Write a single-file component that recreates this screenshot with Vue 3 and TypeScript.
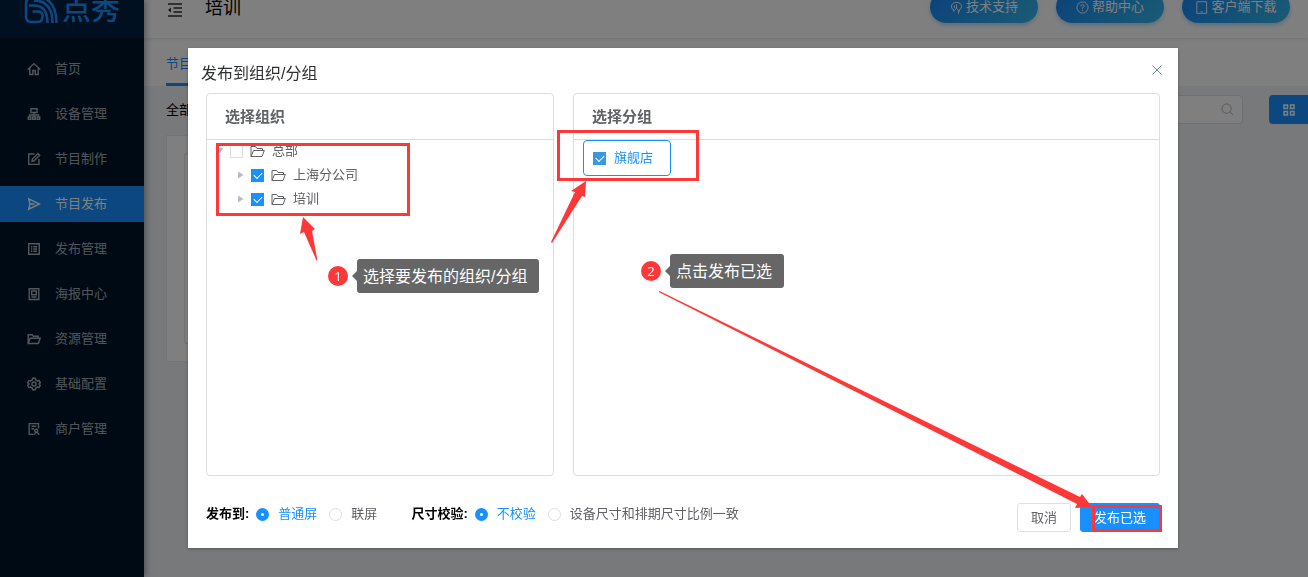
<script setup lang="ts">
import { ref } from 'vue'

interface MenuItem { label: string; icon: string; active?: boolean }
interface TreeNode { label: string; level: number; checked: boolean; open: boolean }

const menu: MenuItem[] = [
  { label: '首页', icon: 'M.8 7.500 7 1.600l6.200 5.900M2.800 6v6.500h3V8.500h2.400v4h3V6' },
  { label: '设备管理', icon: 'M4 1.700h6v3.800H4zM7 5.500v3M2.500 10V8h9v2M7 8v2M1.300 10h2.600v2.200H1.300zM5.700 10h2.600v2.200H5.700zM10.100 10h2.600v2.200h-2.600z' },
  { label: '节目制作', icon: 'M7.500 2H1.700v10.400H12V7M5 9.300l.4-2.200L11 1.500l1.700 1.700-5.600 5.600z' },
  { label: '节目发布', icon: 'M1.700 1.800 12.500 7 1.700 12.200 3 7zM3 7h4.500', active: true },
  { label: '发布管理', icon: 'M1.700 1.700h10.600v10.600H1.700zM4 4.700h1.300M6.300 4.700H10M4 7h1.300M6.300 7H10M4 9.300h1.300M6.300 9.300H10' },
  { label: '海报中心', icon: 'M2.200 1.700h9.600v10.800H2.200zM4.700 4h4.600v3.700H4.700zM4.500 10h5' },
  { label: '资源管理', icon: 'M1.200 11.500V2.700h4l1.200 1.600h4.800v1.900M1.200 11.500l2-5.300h10l-1.800 5.300z' },
  { label: '基础配置', icon: 'M5.700 1.300h2.600l.5 1.700 1.600.9 1.700-.4 1.200 2.200-1.200 1.300 1.200 1.300-1.200 2.200-1.700-.4-1.600.9-.5 1.700H5.700L5.200 11l-1.600-.9-1.700.4L.7 8.300 1.900 7 .7 5.700l1.200-2.200 1.700.4L5.200 3zM7 5a2 2 0 1 0 0 4 2 2 0 0 0 0-4' },
  { label: '商户管理', icon: 'M6.500 12.400H2.200V1.600h9.300v5M4.500 4.300h4.700M4.500 6.800H7M9.200 7.300a1.500 1.500 0 1 0 0 3 1.500 1.500 0 0 0 0-3M7.500 12.700l1-2.400M12.200 12.700l-2-2.400' },
]

const tree = ref<TreeNode[]>([
  { label: '总部', level: 0, checked: false, open: true },
  { label: '上海分公司', level: 1, checked: true, open: false },
  { label: '培训', level: 1, checked: true, open: false },
])
const groupChecked = ref(true)
const target = ref('normal')
const check = ref('none')
const keyword = ref('')
</script>

<template>
  <div class="page">
    <aside class="sidebar">
      <div class="brand">
        <svg class="mark" viewBox="0 0 34 28" aria-hidden="true">
          <path d="M13 1.500H8Q2 1.500 2 8v12.500q0 5.500 5.500 5.500h6q5 0 5-5.500T13.500 15.500H8.500M5 9.500h6q12.500.5 12.500 17.500M10 4.500q18.500.5 18.500 22.500M15 0q17.500 4 17.500 27" />
        </svg>
        <span>点秀</span>
      </div>
      <nav>
        <a v-for="m in menu" :key="m.label" href="#" class="item" :class="{ active: m.active }">
          <svg viewBox="0 0 14 14" aria-hidden="true"><path :d="m.icon" /></svg>
          {{ m.label }}
        </a>
      </nav>
    </aside>

    <main class="main">
      <header class="topbar">
        <svg class="fold" viewBox="0 0 16 14" aria-hidden="true">
          <path d="M1 1h14M6.500 5h8.500M6.500 9h8.500M1 13h14" /><path class="solid" d="M1 7l3-2.500v5z" />
        </svg>
        <h1>培训</h1>
        <button type="button" class="pill">
          <svg viewBox="0 0 14 14" aria-hidden="true"><path d="M4 11.500V9.500Q1.500 8.500 1.500 6 2 1.500 7 1.500t5.500 4.500q0 2.500-2.500 3.500v2M7 3.500v4.500M7 8l-2.500 2M7 8l2.200 2v3.500M4.700 4.500v3" /></svg>技术支持
        </button>
        <button type="button" class="pill">
          <svg viewBox="0 0 14 14" aria-hidden="true"><circle cx="7" cy="7" r="6" /><path d="M5.200 5.700Q5.200 4 7 4t1.800 1.600Q8.800 6.700 7 7.300v1M7 9.300v1.200" /></svg>帮助中心
        </button>
        <button type="button" class="pill">
          <svg viewBox="0 0 14 14" aria-hidden="true"><path d="M2 .8h10.500v12.500H2zM6 11.700h2.500" /></svg>客户端下载
        </button>
      </header>
      <div class="tabs"><a href="#" class="tab">节目</a></div>
      <div class="filters">
        <span>全部</span>
        <label class="search">
          <input v-model="keyword" type="text" aria-label="搜索" />
          <svg viewBox="0 0 14 14" aria-hidden="true"><circle cx="6" cy="6" r="5" /><path d="m9.700 9.700 3.300 3.300" /></svg>
        </label>
        <button type="button" class="grid-btn" aria-label="网格视图">
          <svg viewBox="0 0 12 12" aria-hidden="true"><path d="M1 1h3.500v3.500H1zM7.500 1H11v3.500H7.500zM1 7.500h3.500V11H1zM7.500 7.500H11V11H7.500z" /></svg>
        </button>
      </div>
      <section class="card"><div class="thumb"></div></section>
    </main>

    <div class="overlay">
      <div class="modal" role="dialog" aria-labelledby="dlg-title">
        <div class="modal-head">
          <h2 id="dlg-title">发布到组织/分组</h2>
          <button type="button" class="close" aria-label="关闭">
            <svg viewBox="0 0 14 14" aria-hidden="true"><path d="m2.500 2.500 9 9m0-9-9 9" /></svg>
          </button>
        </div>

        <div class="panels">
          <section class="panel">
            <h3>选择组织</h3>
            <ul class="tree">
              <li v-for="n in tree" :key="n.label" :class="'level-' + n.level">
                <svg class="caret" :class="{ open: n.open }" viewBox="0 0 12 12" aria-hidden="true"><path d="M3 2.500 8.500 6 3 9.500z" /></svg>
                <label>
                  <input v-model="n.checked" type="checkbox" class="box" />
                  <svg class="folder" viewBox="0 0 15 13" aria-hidden="true"><path d="M1 11.500V1.500h4.500L7 3.500h5.500v2M1 11.500l2.500-6H14.300L12 11.500z" /></svg>
                  {{ n.label }}
                </label>
              </li>
            </ul>
          </section>
          <section class="panel">
            <h3>选择分组</h3>
            <label class="chip"><input v-model="groupChecked" type="checkbox" class="box soft" />旗舰店</label>
          </section>
        </div>

        <div class="modal-foot">
          <div class="field" role="radiogroup" aria-label="发布到">
            <b>发布到:</b>
            <label><input v-model="target" type="radio" value="normal" name="target" /><span>普通屏</span></label>
            <label><input v-model="target" type="radio" value="joined" name="target" /><span>联屏</span></label>
          </div>
          <div class="field" role="radiogroup" aria-label="尺寸校验">
            <b>尺寸校验:</b>
            <label><input v-model="check" type="radio" value="none" name="check" /><span>不校验</span></label>
            <label><input v-model="check" type="radio" value="ratio" name="check" /><span>设备尺寸和排期尺寸比例一致</span></label>
          </div>
          <div class="actions">
            <button type="button" class="btn">取消</button>
            <button type="button" class="btn primary">发布已选</button>
          </div>
        </div>
      </div>
    </div>

    <div class="guide">
      <svg width="1308" height="577" aria-hidden="true">
        <g class="frames">
          <rect x="217.500" y="144.500" width="191" height="70" />
          <rect x="558.500" y="131.500" width="139" height="48" />
          <rect x="1093.500" y="506.500" width="67" height="24" />
        </g>
        <path d="M303 217l-3 17 4-2 12.500 28.500h1L312 231l3-2zM586 181l-15 10 4 1-24 50 1 1 30-47 3 1zM659.500 291l-.8 1L1077 504l-2 4 17-1-10-13-2 3z" />
      </svg>
      <div class="step one"><i>1</i><p>选择要发布的组织/分组</p></div>
      <div class="step two"><i>2</i><p>点击发布已选</p></div>
    </div>
  </div>
</template>

<style>
html, body { margin: 0; background: #f0f2f5; }
</style>

<style scoped>
* { box-sizing: border-box; }
.page {
  position: relative;
  display: flex;
  min-height: 100vh;
  overflow: hidden;
  background: #f0f2f5;
  font: 13px/20px "Liberation Sans", "Noto Sans CJK SC", sans-serif;
  color: #303133;
}
svg { fill: none; stroke: currentColor; flex: none; }
a { text-decoration: none; }
button { font: inherit; padding: 0; cursor: pointer; }
h1, h2, h3, p, ul { margin: 0; padding: 0; }

.sidebar { position: relative; z-index: 1; width: 144px; flex: none; background: #001529; box-shadow: 2px 0 6px rgba(0, 21, 41, .35); }
.brand {
  height: 64px;
  margin-top: -26px;
  padding: 8px 0 0 24px;
  display: flex;
  align-items: center;
  gap: 4px;
  background: #002140;
  color: #1890ff;
  font-size: 29px;
  font-weight: 500;
  line-height: 40px;
}
.mark { width: 34px; height: 28px; stroke-width: 2.500; }
nav { display: flex; flex-direction: column; gap: 9px; padding-top: 13px; }
.item { display: flex; align-items: center; gap: 14px; height: 36px; padding-left: 27px; color: rgba(255, 255, 255, .65); }
.item svg { width: 14px; height: 14px; stroke-width: 1.400; }
.item.active { background: #1890ff; color: #fff; }

.main { flex: 1; min-width: 0; }
.topbar {
  position: relative;
  display: flex;
  align-items: center;
  height: 64px;
  margin-top: -26px;
  padding: 2px 18px 0 23px;
  gap: 18px;
  background: #fff;
  box-shadow: 0 1px 4px rgba(0, 21, 41, .12);
}
.fold { width: 16px; height: 14px; margin-top: 6px; stroke-width: 1.500; }
.solid { fill: currentColor; stroke: none; }
h1 { flex: 1; margin-left: 4px; padding-top: 2px; font-size: 18px; font-weight: 400; line-height: 24px; color: #000; }
.pill {
  display: flex;
  align-items: center;
  justify-content: center;
  gap: 3px;
  width: 108px;
  height: 32px;
  border: 0;
  border-radius: 16px;
  color: #fff;
  background: linear-gradient(135deg, #1784f5, #35b8e8);
  box-shadow: 0 2px 4px rgba(24, 144, 255, .35);
}
.pill svg { width: 13px; height: 13px; }
.tabs { display: flex; height: 48px; padding-left: 22px; background: #fff; }
.tab { padding-top: 16px; border-bottom: 3px solid #1890ff; color: #1890ff; }
.filters { display: flex; align-items: center; padding: 9px 0 0 22px; color: #000; }
.search {
  display: flex;
  align-items: center;
  width: 260px;
  height: 29px;
  margin: 0 26px 0 auto;
  padding-right: 8px;
  border: 1px solid #dcdfe6;
  border-radius: 4px;
  background: #fff;
  color: #a8abb2;
}
.search input { flex: 1; min-width: 0; border: 0; outline: 0; background: none; }
.search svg { width: 13px; height: 13px; }
.grid-btn { display: flex; align-items: center; padding-left: 14px; width: 39px; height: 29px; border: 0; border-radius: 4px 0 0 4px; background: #1890ff; color: #fff; }
.grid-btn svg { width: 12px; height: 12px; stroke-width: 1.500; }
.card { width: 256px; margin: 11px 0 0 22px; padding: 17px; border: 1px solid #e8e8e8; background: #fff; }
.thumb { height: 191px; border: 1px solid #e0e0e0; border-radius: 2px; }

.overlay { position: fixed; z-index: 2; inset: 0; padding: 48px 130px 0 188px; background: rgba(0, 0, 0, .5); }
.modal { background: #fff; box-shadow: 0 1px 3px rgba(0, 0, 0, .3); }
.modal-head { display: flex; justify-content: space-between; align-items: flex-start; padding: 14px 14px 7px 13px; }
h2 { font-size: 16px; font-weight: 400; line-height: 24px; }
.close { display: flex; margin-top: 1px; border: 0; background: none; color: #6f91b5; }
.close svg { width: 14px; height: 14px; }
.panels { display: grid; grid-template-columns: 348fr 587fr; gap: 19px; padding: 0 18px; }
.panel { min-height: 383px; border: 1px solid #dcdcdc; border-radius: 4px; color: #606266; }
h3 { padding: 12px 18px 11px; border-bottom: 1px solid #dcdcdc; font-size: 15px; font-weight: 700; line-height: 22px; }
.tree { list-style: none; margin-top: -1px; }
.tree li { display: flex; align-items: center; gap: 4px; height: 24px; padding-left: 7px; }
.tree .level-1 { padding-left: 28px; }
.tree label { display: flex; align-items: center; gap: 7px; }
.caret { width: 12px; height: 12px; fill: #b4bccc; stroke: none; }
.caret.open { transform: rotate(90deg); }
.folder { width: 15px; height: 13px; }
.box {
  appearance: none;
  position: relative;
  flex: none;
  width: 13px;
  height: 13px;
  margin: 0;
  border: 1px solid #dcdfe6;
  background: #fff;
}
.box:checked { border-color: #1890ff; background: #1890ff; }
.box:checked::after {
  content: "";
  position: absolute;
  left: 2px;
  top: 2px;
  width: 7px;
  height: 4px;
  border: solid #fff;
  border-width: 0 0 1px 1px;
  transform: rotate(-45deg);
}
.box.soft:checked { border-color: #3c98dc; background: #3c98dc; }
.chip {
  display: inline-flex;
  align-items: center;
  gap: 8px;
  height: 36px;
  margin-left: 9px;
  padding: 0 17px 0 9px;
  border: 1px solid #1890ff;
  border-radius: 4px;
  color: #1890ff;
}

.modal-foot { display: flex; align-items: flex-start; gap: 34px; padding: 27px 18px 16px; }
.field { display: flex; align-items: center; gap: 12px; height: 22px; color: #606266; white-space: nowrap; }
.field b { margin-right: -5px; color: #000; }
.field label { display: flex; align-items: center; gap: 9px; }
.field input { appearance: none; width: 13px; height: 13px; margin: 0; border: 1px solid #dcdfe6; border-radius: 50%; background: #fff; }
.field input:checked { border: 5px solid #1890ff; }
.field input:checked + span { color: #1890ff; }
.actions { display: flex; gap: 9px; margin-left: auto; }
.btn { height: 29px; padding: 0 13px; border: 1px solid #dcdfe6; border-radius: 3px; background: #fff; color: #606266; }
.btn.primary { border-color: #1890ff; background: #1890ff; color: #fff; }

.guide { position: absolute; z-index: 3; inset: 0; pointer-events: none; }
.guide svg { display: block; fill: #fd3838; stroke: none; }
.guide .frames { fill: none; stroke: #fd3838; stroke-width: 3; }
.step { position: absolute; display: flex; align-items: center; gap: 9px; color: #fff; white-space: nowrap; }
.one { left: 328px; top: 259px; }
.two { left: 641px; top: 254px; }
.step i { width: 20px; height: 20px; border-radius: 50%; background: #fd3838; font: 13px/20px "Open Sans", sans-serif; text-align: center; }
.step p { position: relative; padding: 6px 12px 4px 6px; border-radius: 3px; background: #666; font-size: 16px; line-height: 24px; }
.step p::before { content: ""; position: absolute; left: -5px; top: 12px; border: solid transparent; border-width: 5px 5px 5px 0; border-right-color: #666; }
</style>
